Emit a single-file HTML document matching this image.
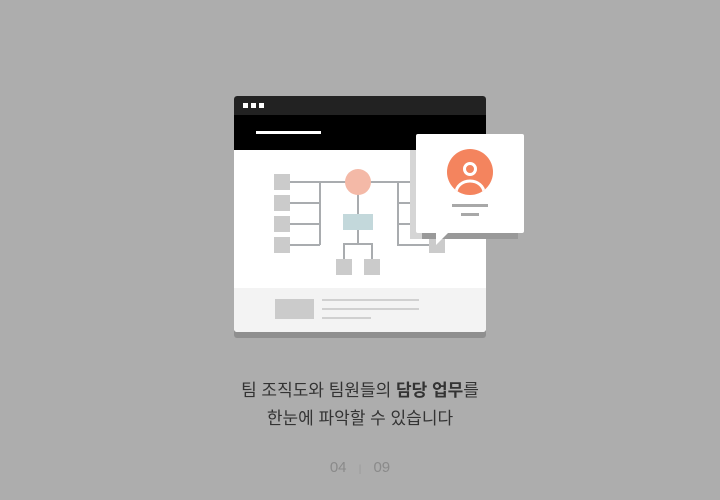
<!DOCTYPE html><html><head><meta charset="utf-8"><style>
body{margin:0;width:720px;height:500px;background:#adadad;position:relative;overflow:hidden;font-family:"Liberation Sans","Noto Sans CJK KR",sans-serif}
svg{position:absolute;left:0;top:0}
.t{position:absolute;left:0;width:720px;text-align:center;color:#333;font-size:17px}
</style></head><body>
<svg width="720" height="500">
<defs><clipPath id="c"><circle cx="470" cy="172" r="23"/></clipPath></defs>
<rect x="234" y="100" width="252" height="238" rx="3" fill="#8f8f8f"/>
<rect x="234" y="96" width="252" height="236" rx="3" fill="#fff"/>
<path d="M237 96h246a3 3 0 0 1 3 3v16H234V99a3 3 0 0 1 3-3z" fill="#222"/>
<rect x="234" y="115" width="252" height="35" fill="#000"/>
<rect x="243" y="103" width="5" height="5" fill="#fff"/><rect x="251" y="103" width="5" height="5" fill="#fff"/><rect x="259" y="103" width="5" height="5" fill="#fff"/>
<rect x="256" y="131" width="65" height="3" fill="#fff"/>
<path d="M234 288h252v41a3 3 0 0 1-3 3H237a3 3 0 0 1-3-3z" fill="#f3f3f3"/>
<g stroke="#a9acaf" stroke-width="2" fill="none">
<path d="M290 182H458M290 203H320M290 224H320M290 245H320M320 182V245M358 182V214M358 230V244M344 259V244H372V259M398 182V245H430M398 203H430M398 224H430"/>
</g>
<g fill="#cbcbcb"><rect x="274" y="174" width="16" height="16"/><rect x="274" y="195" width="16" height="16"/><rect x="274" y="216" width="16" height="16"/><rect x="274" y="237" width="16" height="16"/><rect x="336" y="259" width="16" height="16"/><rect x="364" y="259" width="16" height="16"/><rect x="429" y="237" width="16" height="16"/></g>
<circle cx="358" cy="182" r="13" fill="#f4b9a7"/>
<rect x="343" y="214" width="30" height="16" fill="#c3d8db"/>
<rect x="275" y="299" width="39" height="20" fill="#cbcbcb"/>
<g fill="#d0d0d0"><rect x="322" y="299" width="97" height="2"/><rect x="322" y="308" width="97" height="2"/><rect x="322" y="317" width="49" height="2"/></g>
<rect x="410" y="150" width="108" height="89" fill="#d5d5d5"/>
<rect x="422" y="233" width="96" height="6" fill="#999"/>
<rect x="416" y="134" width="108" height="99" rx="2" fill="#fff"/>
<path d="M436 232L436 245L449 232Z" fill="#fff"/>
<circle cx="470" cy="172" r="23" fill="#f4845e"/>
<g clip-path="url(#c)">
<circle cx="470" cy="169" r="5.5" fill="none" stroke="#fff" stroke-width="3"/>
<path d="M456 197v-4a14 12 0 0 1 28 0v4z" fill="none" stroke="#fff" stroke-width="3"/>
</g>
<rect x="452" y="204" width="36" height="3" fill="#a8a8a8"/>
<rect x="461" y="213" width="18" height="3" fill="#a8a8a8"/>
</svg>
<div class="t" style="top:376px">팀 조직도와 팀원들의 <b>담당 업무</b>를</div>
<div class="t" style="top:404px">한눈에 파악할 수 있습니다</div>
<div class="t" style="top:459px;font-size:15px;color:#8a8a8a">04 <span style="font-size:10px;margin:0 8px;color:#999">|</span> 09</div>
</body></html>
